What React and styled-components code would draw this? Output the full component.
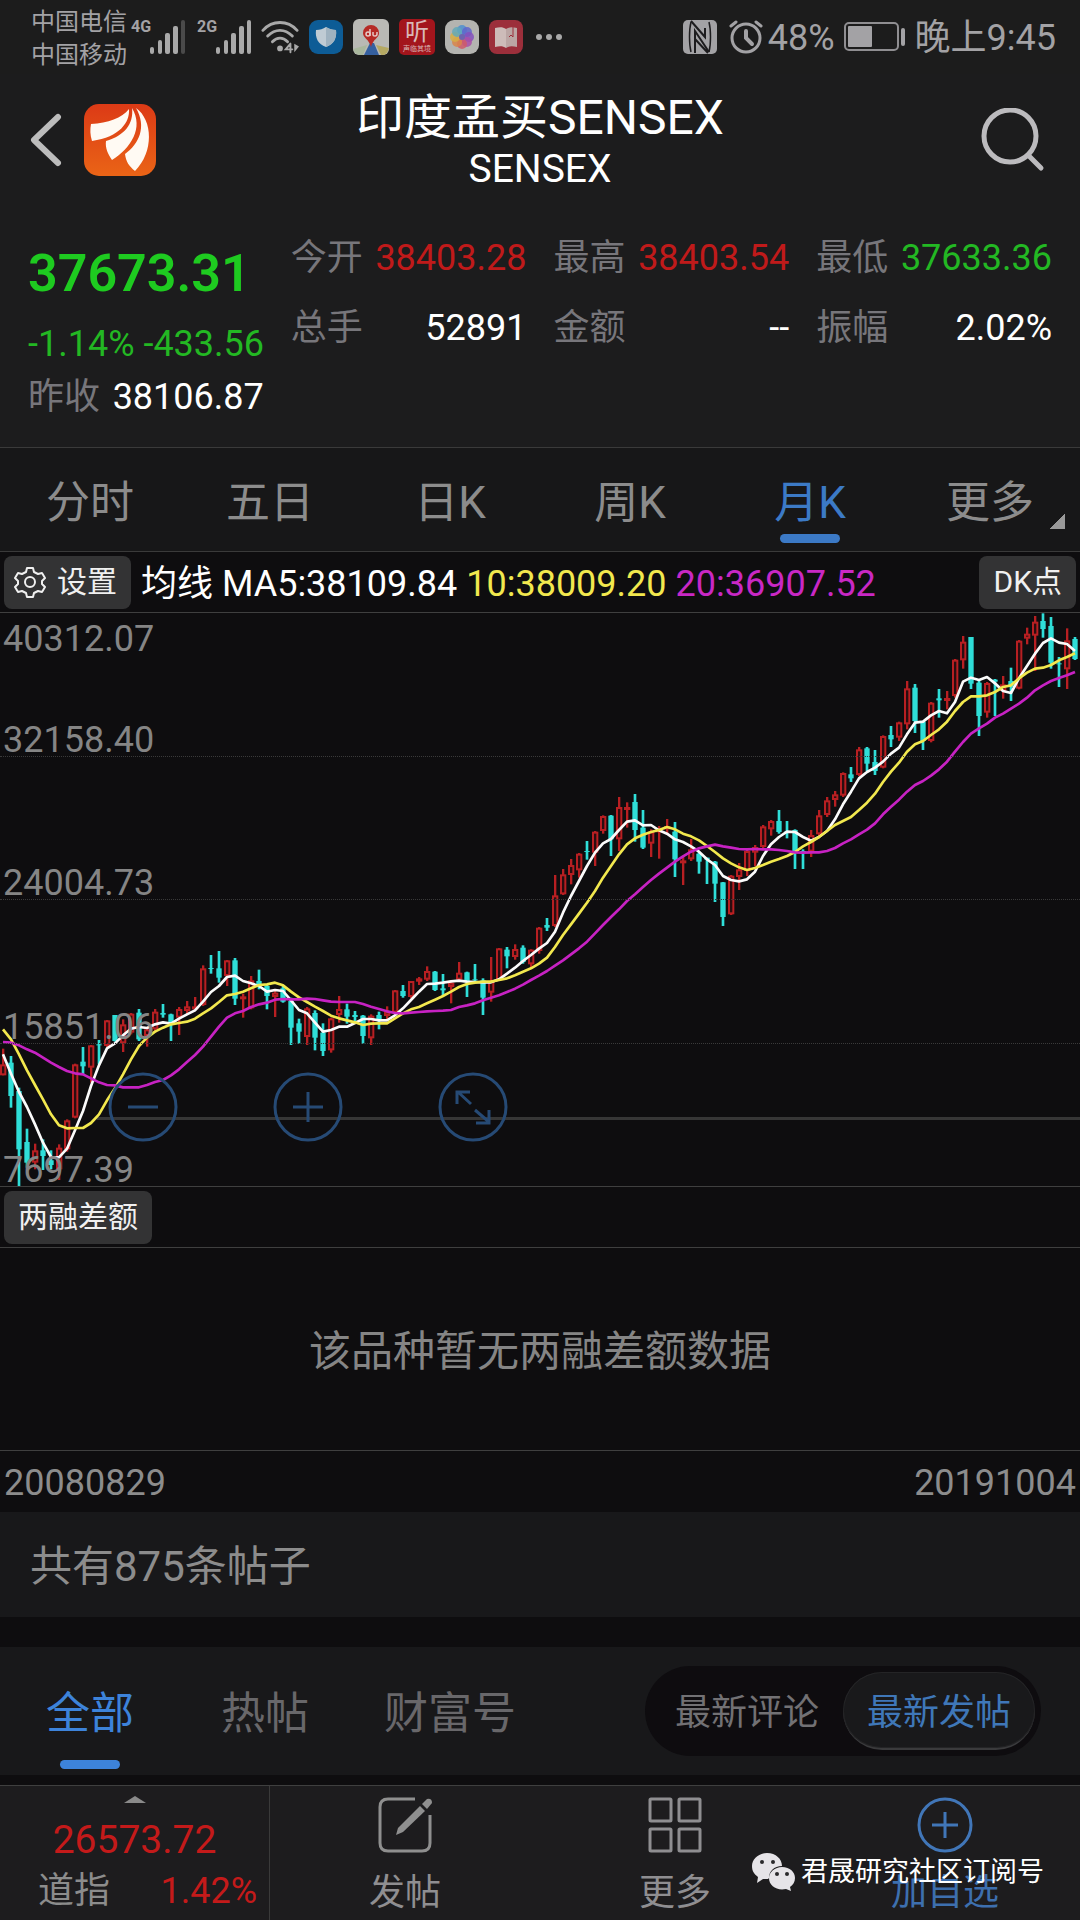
import React from 'react'
import styled, { createGlobalStyle } from 'styled-components'

const quotes = [
  { label: '今开', value: '38403.28', tone: 'up' },
  { label: '最高', value: '38403.54', tone: 'up' },
  { label: '最低', value: '37633.36', tone: 'down' },
  { label: '总手', value: '52891' },
  { label: '金额', value: '--' },
  { label: '振幅', value: '2.02%' },
]

const periods = ['分时', '五日', '日K', '周K', '月K', '更多']

const levels = ['32158.40', '24004.73', '15851.06', '7697.39']

// The chart is drawn on a 3240 x 1722 grid, 24 units for each month.
// Every block holds its values relative to its own base.
const STEP = 24

// r = rising, c = falling: [kind, high, low, body top, body bottom]
const candleBlocks = [
  {
    base: 804,
    bars: [
      ['r', 503, 583, 550, 583], ['c', 525, 680, 545, 645], ['c', 620, 918, 630, 805],
      ['c', 743, 860, 783, 845], ['r', 788, 865, 808, 845], ['c', 775, 867, 808, 825],
      ['c', 808, 865, 838, 852], ['r', 790, 897, 800, 865], ['r', 715, 812, 718, 805],
      ['r', 548, 712, 550, 710], ['c', 498, 580, 542, 556], ['r', 492, 605, 493, 560],
      ['c', 477, 550, 490, 493], ['r', 417, 498, 418, 495], ['c', 402, 482, 402, 480],
      ['r', 415, 513, 430, 487], ['r', 396, 460, 398, 455], ['c', 384, 480, 395, 475],
      ['r', 440, 497, 445, 465], ['r', 384, 455, 392, 445], ['c', 369, 410, 396, 401],
      ['c', 398, 480, 400, 432], ['r', 378, 462, 384, 410], ['r', 360, 400, 376, 390],
      ['r', 348, 385, 376, 380], ['r', 253, 375, 262, 372], ['c', 222, 278, 261, 264],
      ['c', 210, 305, 262, 290], ['r', 237, 315, 238, 285], ['c', 231, 372, 238, 353],
      ['r', 338, 410, 346, 352], ['r', 285, 385, 298, 382], ['c', 266, 325, 300, 312],
      ['c', 310, 385, 315, 345], ['r', 325, 408, 335, 348], ['c', 312, 365, 322, 362],
      ['c', 350, 492, 360, 440], ['c', 413, 488, 427, 452], ['r', 378, 492, 382, 468],
      ['c', 388, 508, 396, 470], ['c', 427, 525, 455, 510], ['r', 410, 515, 412, 508],
      ['r', 345, 425, 384, 402], ['c', 368, 428, 385, 407], ['c', 390, 420, 402, 408],
      ['c', 402, 488, 404, 465], ['r', 400, 492, 404, 472], ['c', 392, 445, 402, 415],
      ['r', 376, 415, 392, 405], ['r', 327, 398, 328, 395], ['c', 312, 350, 330, 345],
      ['r', 300, 352, 300, 348], ['r', 288, 312, 292, 302], ['r', 256, 300, 270, 296],
      ['c', 270, 330, 272, 327], ['c', 279, 345, 322, 328], ['r', 303, 367, 305, 318],
      ['r', 243, 302, 275, 296], ['c', 272, 348, 274, 300], ['c', 249, 305, 295, 298],
      ['c', 292, 402, 298, 350], ['r', 228, 362, 300, 335], ['r', 201, 298, 202, 298],
      ['c', 198, 262, 206, 226], ['r', 190, 236, 204, 228], ['c', 193, 248, 200, 243],
      ['r', 205, 260, 206, 250],
    ],
  },
  {
    base: 444,
    bars: [
      ['r', 498, 578, 500, 570], ['c', 471, 510, 492, 500], ['r', 342, 498, 403, 495],
      ['r', 324, 402, 340, 400], ['r', 294, 370, 312, 342], ['r', 276, 350, 278, 328],
      ['c', 240, 296, 270, 273], ['r', 210, 315, 212, 275], ['r', 163, 218, 165, 210],
      ['c', 162, 285, 164, 235], ['r', 108, 270, 138, 235], ['r', 124, 200, 138, 144],
      ['c', 99, 242, 123, 207], ['c', 147, 264, 200, 260], ['r', 205, 288, 212, 248],
      ['r', 195, 293, 205, 210], ['r', 174, 222, 195, 205], ['c', 183, 348, 212, 295],
      ['r', 285, 372, 298, 302], ['r', 234, 300, 265, 295], ['c', 272, 338, 278, 302],
      ['c', 290, 369, 290, 296], ['c', 300, 423, 302, 368], ['c', 363, 495, 364, 468],
      ['r', 342, 462, 344, 460], ['r', 306, 387, 325, 348], ['r', 264, 345, 270, 330],
      ['r', 252, 316, 258, 275], ['r', 192, 262, 196, 258], ['r', 177, 224, 180, 205],
      ['c', 147, 218, 180, 213], ['c', 180, 232, 211, 214], ['c', 205, 324, 207, 270],
      ['c', 265, 324, 270, 275], ['r', 207, 288, 222, 272],
    ],
  },
  {
    base: -36,
    bars: [
      ['r', 627, 705, 643, 700], ['r', 588, 648, 598, 642], ['r', 570, 617, 580, 597],
      ['r', 514, 588, 516, 584], ['c', 498, 543, 520, 532], ['r', 438, 525, 445, 522],
      ['c', 438, 510, 442, 488], ['c', 447, 522, 483, 510], ['r', 403, 502, 405, 500],
      ['c', 375, 438, 402, 415], ['r', 362, 420, 364, 410], ['r', 240, 385, 262, 370],
      ['c', 249, 396, 260, 360], ['c', 360, 447, 362, 420], ['r', 303, 424, 305, 420],
      ['c', 264, 350, 292, 298], ['r', 270, 325, 291, 294], ['r', 174, 290, 176, 285],
      ['r', 105, 203, 122, 178], ['c', 108, 264, 108, 248], ['c', 235, 405, 245, 345],
      ['r', 243, 350, 246, 335], ['c', 234, 345, 236, 242], ['r', 225, 293, 250, 270],
      ['c', 200, 300, 240, 258], ['r', 117, 265, 119, 263], ['r', 80, 130, 98, 113],
      ['r', 45, 210, 62, 104], ['c', 37, 110, 60, 84], ['c', 48, 203, 75, 185],
      ['c', 168, 258, 187, 190], ['r', 82, 264, 118, 205], ['c', 108, 177, 114, 174],
    ],
  },
]

const averages = [
  {
    color: '#fbfbfb',
    blocks: [
      { base: 804, values: [520, 578, 633, 678, 730, 785, 828, 829, 803, 748, 690, 615, 553, 502, 487, 463, 443, 438, 441, 430, 424, 428, 413, 400, 388, 362, 333, 315, 288, 284, 300, 307, 315, 332, 327, 330, 358, 387, 397, 425, 452, 447, 437, 437, 426, 414, 414, 418, 418, 403, 382, 357, 332, 309, 308, 305, 301, 299, 302, 303, 304, 304, 295, 278, 260, 240, 222] },
      { base: 444, values: [563, 546, 512, 455, 405, 360, 315, 275, 247, 234, 207, 182, 178, 193, 192, 208, 218, 235, 243, 256, 272, 295, 312, 345, 357, 361, 355, 332, 285, 250, 228, 212, 213, 228, 239] },
      { base: -36, values: [708, 690, 655, 610, 572, 532, 513, 500, 482, 458, 440, 400, 365, 362, 343, 330, 337, 303, 242, 230, 237, 228, 247, 270, 276, 232, 195, 158, 126, 112, 125, 129, 150] },
    ],
  },
  {
    color: '#f2e84e',
    blocks: [
      { base: 804, values: [445, 475, 520, 568, 612, 655, 700, 733, 742, 741, 741, 726, 700, 658, 622, 580, 535, 495, 470, 452, 440, 430, 426, 422, 413, 397, 382, 363, 343, 339, 332, 322, 312, 310, 305, 313, 332, 349, 363, 377, 390, 404, 412, 418, 424, 432, 428, 427, 427, 412, 397, 385, 378, 367, 356, 345, 332, 318, 309, 305, 302, 302, 297, 292, 283, 272, 262] },
      { base: 444, values: [608, 590, 558, 522, 490, 458, 425, 390, 350, 315, 280, 250, 232, 221, 213, 207, 198, 205, 218, 226, 238, 255, 273, 292, 307, 319, 327, 321, 312, 302, 294, 285, 273, 256, 243] },
      { base: -36, values: [708, 690, 672, 660, 648, 627, 605, 578, 543, 512, 485, 452, 430, 420, 402, 385, 362, 330, 303, 286, 286, 283, 273, 258, 253, 232, 215, 203, 200, 192, 178, 168, 157] },
    ],
  },
  {
    color: '#c722c3',
    blocks: [
      { base: 804, values: [483, 485, 493, 505, 515, 530, 545, 558, 570, 577, 580, 592, 604, 612, 613, 619, 619, 619, 612, 603, 597, 583, 565, 543, 522, 497, 467, 437, 410, 397, 390, 378, 370, 365, 356, 354, 355, 355, 353, 354, 358, 362, 363, 363, 363, 369, 377, 384, 391, 396, 397, 395, 393, 391, 390, 389, 387, 378, 373, 367, 358, 350, 343, 333, 323, 311, 297] },
      { base: 444, values: [644, 630, 614, 598, 580, 562, 542, 517, 492, 468, 445, 420, 400, 378, 357, 338, 320, 302, 286, 272, 262, 256, 251, 256, 260, 264, 265, 264, 265, 265, 267, 270, 274, 275, 274] },
      { base: -36, values: [754, 750, 741, 727, 715, 700, 686, 667, 640, 617, 596, 572, 552, 540, 524, 505, 482, 452, 423, 398, 382, 368, 350, 338, 323, 308, 290, 268, 253, 240, 231, 223, 213] },
    ],
  },
]

const candles = candleBlocks.flatMap(({ base, bars }) =>
  bars.map(([kind, ...ys]) => [kind, ...ys.map((y) => y + base)])
)

const toPoints = (blocks) =>
  blocks
    .flatMap(({ base, values }) => values.map((v) => v + base))
    .map((y, i) => `${9 + i * STEP},${y}`)
    .join(' ')

const Candle = ({ index, kind, high, low, top, bottom }) => {
  const x = 9 + index * STEP
  if (kind === 'c') {
    return (
      <g fill='#2fded8'>
        <rect x={x - 4} y={high} width='8' height={low - high} />
        <rect x={x - 8} y={top} width='16' height={bottom - top} />
      </g>
    )
  }
  return (
    <g fill='#b81f22'>
      <rect x={x - 3} y={high} width='7' height={low - high} />
      <rect x={x - 6} y={top + 3} width='13' height={Math.max(bottom - top - 6, 3)} fill='#2a0d10' stroke='#b81f22' strokeWidth='6' />
    </g>
  )
}

const PriceChart = () => (
  <ChartSvg viewBox='0 0 3240 1722' preserveAspectRatio='none' role='img' aria-label='月K线图'>
    <rect x='290' y='1512' width='2950' height='9' fill='#363636' />
    {candles.map(([kind, high, low, top, bottom], i) => (
      <Candle key={i} index={i} kind={kind} high={high} low={low} top={top} bottom={bottom} />
    ))}
    {averages.map(({ color, blocks }) => (
      <polyline key={color} points={toPoints(blocks)} fill='none' stroke={color} strokeWidth='8' strokeLinejoin='round' />
    ))}
  </ChartSvg>
)

const SignalIcon = ({ weak }) => (
  <svg width='36' height='34' viewBox='0 0 36 34' fill='#a9a9a9'>
    <rect x='0' y='27' width='4' height='7' rx='2' />
    <rect x='8' y='20' width='4' height='14' rx='2' />
    <rect x='15' y='13' width='5' height='21' rx='2' />
    <rect x='23' y='6' width='5' height='28' rx='2' />
    <rect x='31' y='0' width='4' height='34' rx='2' fill={weak ? '#4a4a4a' : '#a9a9a9'} />
  </svg>
)

const WifiIcon = () => (
  <svg width='38' height='34' viewBox='0 0 40 34' fill='none' stroke='#a9a9a9' strokeWidth='3' strokeLinecap='round'>
    <path d='M2 10 C12 -1 28 -1 38 10' />
    <path d='M7 16 C15 8 25 8 33 16' />
    <path d='M12 22 C17 17 23 17 28 22' />
    <circle cx='20' cy='29' r='3' fill='#a9a9a9' stroke='none' />
    <path d='M31 24 V33 M31 24 L26 30 H33' strokeWidth='2' />
    <path d='M35 24 V33 L40 27Z' fill='#a9a9a9' stroke='none' />
  </svg>
)

const ShieldAppIcon = () => (
  <svg width='34' height='34' viewBox='0 0 34 34'>
    <rect width='34' height='34' rx='9' fill='#0d5c96' />
    <path d='M17 7 C20 9 23 10 27 10 C28 18 25 24 17 27 C9 24 6 18 7 10 C11 10 14 9 17 7Z' fill='#bfcbd4' />
    <path d='M17 7 C20 9 23 10 27 10 C28 18 25 24 17 27Z' fill='#9fb2c0' />
  </svg>
)

const MapAppIcon = () => (
  <svg width='36' height='36' viewBox='0 0 36 36'>
    <rect width='36' height='36' rx='6' fill='#b9b9b5' />
    <path d='M2 34 L0 30 L14 26 L10 36 H6Z' fill='#a9b79d' />
    <path d='M34 34 L36 29 L23 26 L28 36 H31Z' fill='#b5a963' />
    <path d='M17 24 H21 L26 36 H11Z' fill='#3560a0' />
    <path d='M18 28 C16 20 10 19 10 14 A8 8 0 0 1 26 14 C26 19 20 20 18 28Z' fill='#b62a26' />
    <path d='M17 10 V17 M20 13 V16 Q20 17 22 17 T24 15 V13' stroke='#e6c9c6' strokeWidth='1.5' fill='none' />
    <circle cx='15' cy='15' r='2' stroke='#e6c9c6' strokeWidth='1.5' fill='none' />
  </svg>
)

const PhotosAppIcon = () => (
  <svg width='34' height='34' viewBox='0 0 34 34'>
    <rect width='34' height='34' rx='9' fill='#b4b4b0' />
    {['#4f8fd0', '#5f66cc', '#8450bd', '#a94fa8', '#cf5a68', '#d9854a', '#d6ae45', '#63a9b8'].map((color, i) => (
      <circle key={color} cx='17' cy='10' r='5' fill={color} fillOpacity='0.85' transform={`rotate(${i * 45} 17 17)`} />
    ))}
    <circle cx='17' cy='17' r='3' fill='#6f64ae' />
  </svg>
)

const BookAppIcon = () => (
  <svg width='34' height='34' viewBox='0 0 34 34'>
    <rect width='34' height='34' rx='8' fill='#9c2f3b' />
    <path d='M6 8 C11 7 14 7 17 9 V28 C14 26 11 26 6 27Z' fill='#cdbcb9' />
    <path d='M28 8 C23 7 20 7 17 9 V28 C20 26 23 26 28 27Z' fill='#bba6a4' />
    <path d='M24 7 V17 L22 15 L20 17' fill='none' stroke='#9c2f3b' strokeWidth='1' />
  </svg>
)

const DotsIcon = () => (
  <svg width='29' height='6' viewBox='-3 0 29 6' fill='#a9a9a9'>
    <circle cx='3' cy='3' r='3' />
    <circle cx='13' cy='3' r='3' />
    <circle cx='23' cy='3' r='3' />
  </svg>
)

const NfcIcon = () => (
  <svg width='34' height='34' viewBox='0 0 34 34'>
    <rect width='34' height='34' rx='5' fill='#a3a2a5' />
    <path d='M8 2 C6 10 6 24 8 32 M26 2 C28 10 28 24 26 32' stroke='#1d1c1e' strokeWidth='1.5' fill='none' />
    <path d='M8 1 L22 17 V8 M12 33 V11 L26 32 M12 19 L25 33' stroke='#1d1c1e' strokeWidth='2' fill='none' />
  </svg>
)

const AlarmIcon = () => (
  <svg width='34' height='34' viewBox='0 0 34 34' fill='none' stroke='#a3a2a5' strokeWidth='3' strokeLinecap='round'>
    <circle cx='17' cy='18' r='14' />
    <path d='M2 6 L7 2 M32 6 L27 2' />
    <path d='M17 11 V18 L23 24' strokeWidth='4' />
  </svg>
)

const BatteryIcon = () => (
  <svg width='62' height='30' viewBox='0 0 62 30'>
    <rect x='1' y='1' width='53' height='27' rx='4' fill='none' stroke='#8f8e91' strokeWidth='2' />
    <rect x='4' y='4' width='24' height='21' rx='1' fill='#a3a2a5' />
    <rect x='57' y='6' width='4' height='18' rx='2' fill='#a3a2a5' />
  </svg>
)

const BackIcon = () => (
  <svg width='34' height='54' viewBox='0 0 34 54' fill='none' stroke='#bcbcbc' strokeWidth='6' strokeLinecap='round' strokeLinejoin='round'>
    <path d='M30 4 L6 27 L30 50' />
  </svg>
)

const LogoIcon = () => (
  <svg width='72' height='72' viewBox='0 0 72 72'>
    <defs>
      <linearGradient id='logo' x1='0' y1='0' x2='0' y2='1'>
        <stop offset='0' stopColor='#dc3a16' />
        <stop offset='1' stopColor='#ea6416' />
      </linearGradient>
    </defs>
    <rect width='72' height='72' rx='15' fill='url(#logo)' />
    <path d='M7 20 C24 19 38 14 45 5 C46 18 36 33 8 37 C6 31 6 25 7 20Z' fill='#fffaf3' />
    <path d='M48 4 C50 20 40 32 22 37 C21 44 24 50 28 56 C47 44 60 24 48 4Z' fill='#fffaf3' />
    <path d='M52 4 C69 16 70 48 51 67 C45 62 42 58 41 50 C55 40 63 23 52 4Z' fill='#fffaf3' />
  </svg>
)

const SearchIcon = () => (
  <svg width='64' height='64' viewBox='0 0 64 64' fill='none' stroke='#bcbbbe' strokeWidth='5' strokeLinecap='round'>
    <circle cx='29' cy='28' r='26' />
    <path d='M48 48 L60 60' />
  </svg>
)

const GearIcon = () => (
  <svg width='32' height='32' viewBox='0 0 32 32' fill='none' stroke='#f0f0f0' strokeWidth='2' strokeLinejoin='round'>
    <path d='M13 2 H19 L20 6 L24 8 L28 7 L31 12 L28 15 V18 L31 21 L28 26 L24 25 L20 27 L19 31 H13 L12 27 L8 25 L4 26 L1 21 L4 18 V15 L1 12 L4 7 L8 8 L12 6Z' />
    <circle cx='16' cy='16' r='5' />
  </svg>
)

const ZoomIcon = ({ path }) => (
  <svg width='70' height='70' viewBox='0 0 70 70' fill='none' stroke='#264a75' strokeWidth='3'>
    <circle cx='35' cy='35' r='33' />
    <path d={path} />
  </svg>
)

const ComposeIcon = () => (
  <svg width='54' height='56' viewBox='0 0 54 56'>
    <path d='M37 2 H10 Q2 2 2 10 V46 Q2 54 10 54 H44 Q52 54 52 46 V18' fill='none' stroke='#8f8f8f' strokeWidth='3' />
    <path d='M18 38 L20 31 L42 9 L47 14 L25 35Z' fill='#8f8f8f' />
    <path d='M44 7 L49 2 Q54 1 54 6 L49 12Z' fill='#8f8f8f' />
  </svg>
)

const GridIcon = () => (
  <svg width='54' height='56' viewBox='0 0 54 56' fill='none' stroke='#8f8e91' strokeWidth='3'>
    <rect x='2' y='2' width='21' height='22' rx='1' />
    <rect x='31' y='2' width='21' height='22' rx='1' />
    <rect x='2' y='32' width='21' height='22' rx='1' />
    <rect x='31' y='32' width='21' height='22' rx='1' />
  </svg>
)

const AddIcon = () => (
  <svg width='56' height='56' viewBox='0 0 56 56' fill='none' stroke='#4176b8' strokeWidth='3'>
    <circle cx='28' cy='28' r='26' />
    <path d='M28 15 V41 M15 28 H41' />
  </svg>
)

const WechatIcon = () => (
  <svg width='44' height='38' viewBox='0 0 44 38'>
    <path d='M15 0 C24 0 30 6 30 13 C22 13 17 18 17 25 L16 26 L11 26 L5 30 L6 24 C2 21 0 18 0 13 C0 6 7 0 15 0Z' fill='#e6e4e8' />
    <path d='M30 14 C38 14 43 19 43 25 C43 29 41 32 38 34 L39 38 L34 36 C25 38 17 33 17 25 C17 19 23 14 30 14Z' fill='#e6e4e8' />
    <g fill='#2a292b'>
      <circle cx='10' cy='9' r='2' />
      <circle cx='21' cy='9' r='2' />
      <circle cx='25' cy='21' r='2' />
      <circle cx='35' cy='21' r='2' />
    </g>
  </svg>
)

const App = () => {
  return (
    <>
      <GlobalStyle />
      <Page>
        <StatusBar>
          <StatusGroup>
            <Carriers>
              <span>中国电信</span>
              <span>中国移动</span>
            </Carriers>
            <Network>4G</Network>
            <SignalIcon weak />
            <SecondNetwork>2G</SecondNetwork>
            <SignalIcon />
            <AppIcons>
              <WifiIcon />
              <ShieldAppIcon />
              <MapAppIcon />
              <ListenApp>
                <b>听</b>
                <small>声临其境</small>
              </ListenApp>
              <PhotosAppIcon />
              <BookAppIcon />
              <DotsIcon />
            </AppIcons>
          </StatusGroup>
          <StatusGroup>
            <NfcIcon />
            <Alarm><AlarmIcon /></Alarm>
            <StatusText>48%</StatusText>
            <Battery><BatteryIcon /></Battery>
            <StatusText>晚上9:45</StatusText>
          </StatusGroup>
        </StatusBar>

        <Header>
          <HeaderSide>
            <IconButton aria-label='返回'><BackIcon /></IconButton>
            <LogoIcon />
          </HeaderSide>
          <Titles>
            <Title>印度孟买SENSEX</Title>
            <Subtitle>SENSEX</Subtitle>
          </Titles>
          <HeaderEnd>
            <IconButton aria-label='搜索'><SearchIcon /></IconButton>
          </HeaderEnd>
        </Header>

        <Quote>
          <PriceBlock>
            <Price>37673.31</Price>
            <Change>-1.14% -433.56</Change>
            <dl>
              <QuoteItem>
                <QuoteLabel>昨收</QuoteLabel>
                <QuoteValue>38106.87</QuoteValue>
              </QuoteItem>
            </dl>
          </PriceBlock>
          <QuoteGrid>
            {quotes.map(({ label, value, tone }) => (
              <QuoteItem key={label}>
                <QuoteLabel>{label}</QuoteLabel>
                <QuoteValue $tone={tone}>{value}</QuoteValue>
              </QuoteItem>
            ))}
          </QuoteGrid>
        </Quote>

        <Periods>
          {periods.map((period) => (
            <Period key={period} $active={period === '月K'} $corner={period === '更多'}>
              {period}
            </Period>
          ))}
        </Periods>

        <Toolbar>
          <SettingsButton><GearIcon />设置</SettingsButton>
          <Legend>
            <span>均线 MA5:38109.84</span>
            <LegendTen>10:38009.20</LegendTen>
            <LegendTwenty>20:36907.52</LegendTwenty>
          </Legend>
          <ToolButton>DK点</ToolButton>
        </Toolbar>

        <Chart>
          <PriceChart />
          <Scale>
            {levels.map((level, i) => (
              <Band key={level}>
                {i === 0 && <span>40312.07</span>}
                <BandEnd>{level}</BandEnd>
              </Band>
            ))}
          </Scale>
          <ZoomControls>
            <IconButton aria-label='缩小'><ZoomIcon path='M20 35 H50' /></IconButton>
            <IconButton aria-label='放大'><ZoomIcon path='M20 35 H50 M35 20 V50' /></IconButton>
            <IconButton aria-label='全屏'><ZoomIcon path='M33 32 L20 20 M19 32 V20 H32 M37 38 L51 50 M51 38 V51 H38' /></IconButton>
          </ZoomControls>
        </Chart>

        <Toolbar>
          <ToolButton>两融差额</ToolButton>
        </Toolbar>
        <Empty>该品种暂无两融差额数据</Empty>
        <Dates>
          <span>20080829</span>
          <span>20191004</span>
        </Dates>

        <PostCount>共有875条帖子</PostCount>

        <PostBar>
          <PostTabs>
            <PostTab $active>全部</PostTab>
            <PostTab>热帖</PostTab>
            <PostTab>财富号</PostTab>
          </PostTabs>
          <Sort>
            <SortButton>最新评论</SortButton>
            <SortButton $active>最新发帖</SortButton>
          </Sort>
        </PostBar>

        <BottomBar>
          <IndexButton>
            <Arrow width='22' height='7' viewBox='0 0 22 7'>
              <path d='M0 7 L11 0 L22 7Z' fill='#8a8a8a' />
            </Arrow>
            <IndexPrice>26573.72</IndexPrice>
            <IndexRow>
              <span>道指</span>
              <IndexRate>1.42%</IndexRate>
            </IndexRow>
          </IndexButton>
          <Action><ComposeIcon />发帖</Action>
          <Action><GridIcon />更多</Action>
          <Action $accent><AddIcon />加自选</Action>
          <Watermark>
            <WechatIcon />
            君晟研究社区订阅号
          </Watermark>
        </BottomBar>
      </Page>
    </>
  )
}

export default App

const GlobalStyle = createGlobalStyle`
  * {
    box-sizing: border-box;
  }

  body {
    margin: 0;
    background: #0e0d0f;
  }

  button {
    padding: 0;
    border: 0;
    background: none;
    color: inherit;
    font: inherit;
  }

  dl {
    margin: 0;
  }

  svg {
    display: block;
    flex-shrink: 0;
  }
`;

const Page = styled.div`
  color: #8c8c8c;
  font-family: Roboto, 'Noto Sans CJK SC', sans-serif;
  font-size: 36px;
  line-height: 44px;
  white-space: nowrap;
`;

const StatusBar = styled.div`
  display: flex;
  justify-content: space-between;
  height: 74px;
  padding: 0 24px 0 31px;
  background: #1c1c1c;
  color: #a3a2a5;
`;

const StatusGroup = styled.div`
  display: flex;
  align-items: center;
`;

const Carriers = styled.div`
  display: flex;
  flex-direction: column;
  width: 100px;
  padding-top: 3px;
  font-size: 24px;
  line-height: 33px;
`;

const Network = styled.span`
  align-self: flex-start;
  width: 19px;
  padding-top: 17px;
  font-size: 16px;
  font-weight: 700;
  line-height: 20px;
`;

const SecondNetwork = styled(Network)`
  margin-left: 11px;
`;

const AppIcons = styled.div`
  display: flex;
  align-items: center;
  gap: 10px;
  margin-left: 9px;
`;

const ListenApp = styled.div`
  display: flex;
  flex-direction: column;
  align-items: center;
  width: 36px;
  height: 36px;
  border-radius: 5px;
  background: #a3151c;
  color: #d9b9b8;

  b {
    font-size: 24px;
    font-weight: 400;
    line-height: 26px;
  }

  small {
    font-size: 7px;
    line-height: 8px;
  }
`;

const StatusText = styled.span`
  padding-top: 2px;
`;

const Alarm = styled.span`
  margin: 0 5px 0 12px;
`;

const Battery = styled.span`
  margin: 0 9px;
`;

const Header = styled.header`
  display: grid;
  grid-template-columns: 1fr auto 1fr;
  align-items: center;
  height: 132px;
  padding: 0 28px;
  background: #1c1c1d;
`;

const HeaderSide = styled.div`
  display: flex;
  align-items: center;
  gap: 22px;
`;

const HeaderEnd = styled(HeaderSide)`
  justify-content: flex-end;
  padding-right: 7px;
`;

const IconButton = styled.button`
  display: block;
`;

const Titles = styled.div`
  padding-top: 5px;
  color: #fff;
  text-align: center;
`;

const Title = styled.h1`
  margin: 0;
  font-size: 48px;
  font-weight: 400;
  line-height: 52px;
`;

const Subtitle = styled.div`
  font-size: 39px;
  line-height: 50px;
`;

const Quote = styled.section`
  display: grid;
  grid-template-columns: repeat(4, 1fr);
  gap: 0 27px;
  height: 242px;
  padding: 30px 28px 0;
  border-bottom: 1px solid #3a3a3a;
  background: #1c1c1d;
`;

const PriceBlock = styled.div`
  min-width: 0;
`;

const Price = styled.div`
  margin: 6px 0 16px;
  color: #1ecb20;
  font-size: 52px;
  font-weight: 600;
  line-height: 64px;
`;

const Change = styled.div`
  margin-bottom: 9px;
  color: #23b823;
`;

const QuoteGrid = styled.dl`
  display: grid;
  grid-column: span 3;
  grid-template-columns: repeat(3, 1fr);
  align-content: start;
  gap: 26px 27px;
`;

const QuoteItem = styled.div`
  display: flex;
  justify-content: space-between;
`;

const QuoteLabel = styled.dt`
  color: #77767b;
`;

const QuoteValue = styled.dd`
  margin: 0;
  color: ${({ $tone }) => ($tone === 'up' ? '#c01a1a' : $tone === 'down' ? '#23b823' : '#fff')};
`;

const Periods = styled.nav`
  display: grid;
  grid-template-columns: repeat(6, 1fr);
  height: 104px;
  border-bottom: 1px solid #3a3a3a;
  background: #171718;
`;

const Period = styled.button`
  position: relative;
  padding-top: 7px;
  color: ${({ $active }) => ($active ? '#3c7ac6' : '#8c8c8c')};
  font-size: 44px;

  &::after {
    content: '';
    display: ${({ $active, $corner }) => ($active || $corner ? 'block' : 'none')};
    position: absolute;
    right: ${({ $corner }) => ($corner ? '15px' : '60px')};
    bottom: ${({ $corner }) => ($corner ? '22px' : '8px')};
    width: ${({ $corner }) => ($corner ? '15px' : '60px')};
    height: ${({ $corner }) => ($corner ? '15px' : '9px')};
    border-radius: ${({ $corner }) => ($corner ? '0' : '5px')};
    background: ${({ $corner }) => ($corner ? 'linear-gradient(135deg, transparent 50%, #999 50%)' : '#3c7ac6')};
  }
`;

const Toolbar = styled.div`
  display: flex;
  align-items: center;
  gap: 10px;
  height: 61px;
  padding: 0 4px;
  border-bottom: 1px solid #3f3f3f;
`;

const ToolButton = styled.button`
  display: flex;
  align-items: center;
  gap: 11px;
  height: 53px;
  padding: 0 14px;
  border-radius: 8px;
  background: #333334;
  color: #f0f0f0;
  font-size: 30px;
`;

const SettingsButton = styled(ToolButton)`
  padding-left: 10px;
`;

const Legend = styled.div`
  display: flex;
  flex: 1;
  gap: 9px;
  padding-top: 4px;
  color: #fff;
`;

const LegendTen = styled.span`
  color: #f2e84e;
`;

const LegendTwenty = styled.span`
  color: #c928c5;
`;

const Chart = styled.section`
  position: relative;
  height: 574px;
`;

const ChartSvg = styled.svg`
  width: 100%;
  height: 100%;
`;

const Scale = styled.div`
  display: flex;
  flex-direction: column;
  position: absolute;
  inset: 0;
  color: #858585;
  line-height: 31px;
`;

const Band = styled.div`
  display: flex;
  flex: 1;
  flex-direction: column;
  padding: 11px 3px 0;
  border-bottom: 1px dotted #3a3a3a;

  &:last-child {
    border-bottom: 1px solid #3f3f3f;
  }
`;

const BandEnd = styled.span`
  margin-top: auto;
`;

const ZoomControls = styled.div`
  display: flex;
  gap: 95px;
  position: absolute;
  left: 108px;
  bottom: 45px;
`;

const Empty = styled.div`
  display: flex;
  align-items: center;
  justify-content: center;
  height: 203px;
  padding-top: 5px;
  border-bottom: 1px solid #3f3f3f;
  color: #858585;
  font-size: 42px;
`;

const Dates = styled.div`
  display: flex;
  align-items: center;
  justify-content: space-between;
  height: 61px;
  padding: 3px 4px 0;
`;

const PostCount = styled.div`
  display: flex;
  align-items: center;
  height: 105px;
  padding: 5px 30px 0;
  background: #18181a;
  font-size: 42px;
`;

const PostBar = styled.section`
  display: flex;
  align-items: center;
  justify-content: space-between;
  height: 128px;
  margin: 30px 0 10px;
  padding-right: 39px;
  background: #18181a;
`;

const PostTabs = styled.div`
  display: grid;
  grid-template-columns: 180px 170px 200px;
  height: 100%;
`;

const PostTab = styled.button`
  position: relative;
  padding-top: 6px;
  color: ${({ $active }) => ($active ? '#3d83da' : '#68676a')};
  font-size: 44px;

  &::after {
    content: '';
    display: ${({ $active }) => ($active ? 'block' : 'none')};
    position: absolute;
    right: 60px;
    bottom: 6px;
    width: 60px;
    height: 9px;
    border-radius: 5px;
    background: #3d83da;
  }
`;

const Sort = styled.div`
  display: flex;
  padding: 6px;
  border-radius: 45px;
  background: #0e0c0f;
`;

const SortButton = styled.button`
  width: 192px;
  height: 78px;
  padding-top: 6px;
  border-bottom: 2px solid ${({ $active }) => ($active ? '#3a3a3c' : 'transparent')};
  border-radius: 39px;
  background: ${({ $active }) => ($active ? '#19191b' : 'none')};
  box-shadow: ${({ $active }) => ($active ? 'inset 0 0 0 1px #242426' : 'none')};
  color: ${({ $active }) => ($active ? '#3f77b8' : '#727174')};
`;

const BottomBar = styled.footer`
  display: grid;
  grid-template-columns: repeat(4, 1fr);
  position: relative;
  height: 135px;
  border-top: 1px solid #3f3f3f;
  background: #1d1c1e;
`;

const IndexButton = styled.button`
  display: flex;
  flex-direction: column;
  align-items: center;
  padding-top: 10px;
  border-right: 1px solid #3a3a3a;
`;

const Arrow = styled.svg`
  margin-bottom: 12px;
`;

const IndexPrice = styled.span`
  color: #c41a1a;
  font-size: 39px;
  line-height: 50px;
`;

const IndexRow = styled.span`
  display: flex;
  justify-content: space-between;
  width: 100%;
  padding: 4px 12px 0 38px;
`;

const IndexRate = styled.span`
  color: #c41a1a;
`;

const Action = styled.button`
  display: flex;
  flex-direction: column;
  align-items: center;
  gap: 18px;
  padding-top: 11px;
  color: ${({ $accent }) => ($accent ? '#3d6fae' : '#8f8e91')};
`;

const Watermark = styled.div`
  display: flex;
  align-items: center;
  gap: 5px;
  position: absolute;
  right: 36px;
  bottom: 28px;
  color: #fff;
  font-size: 27px;
  line-height: 40px;
`;
